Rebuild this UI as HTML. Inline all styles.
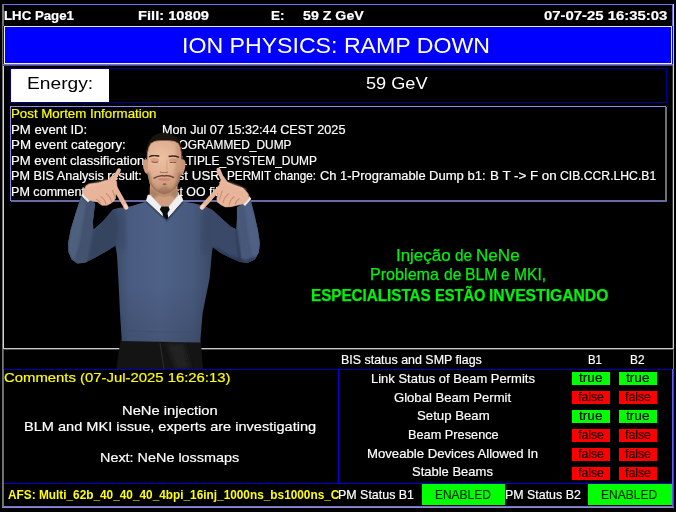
<!DOCTYPE html>
<html><head><meta charset="utf-8">
<style>
html,body{margin:0;padding:0;background:#000;}
body{width:676px;height:512px;position:relative;overflow:hidden;font-family:"Liberation Sans",sans-serif;color:#fff;}
.a{position:absolute;white-space:pre;line-height:1;transform-origin:0 0;}
.ln{position:absolute;}
.t{position:absolute;height:13px;width:38px;background:#00ff00;}
.f{position:absolute;height:13px;width:38px;background:#ff0000;}
</style></head><body>
<!-- frame lines -->
<div class="ln" style="left:3px;top:4px;width:670px;height:1px;background:#6c6cff"></div>
<div class="ln" style="left:2px;top:4px;width:1px;height:504px;background:#747474"></div>
<div class="ln" style="left:3px;top:5px;width:1px;height:21px;background:#6868f0"></div>
<div class="ln" style="left:3px;top:65px;width:1px;height:284px;background:#d6d6d6"></div>
<div class="ln" style="left:3px;top:349px;width:1px;height:20px;background:#5a5a5a"></div>
<div class="ln" style="left:3px;top:369px;width:1px;height:138px;background:#5a5aff"></div>
<div class="ln" style="left:672px;top:5px;width:1px;height:21px;background:#6868f0"></div>
<div class="ln" style="left:672px;top:65px;width:1px;height:284px;background:#3a3a3a"></div>
<div class="ln" style="left:672px;top:369px;width:1px;height:138px;background:#5a5aff"></div>
<div class="ln" style="left:673px;top:4px;width:1px;height:345px;background:#d2d2d2"></div>
<div class="ln" style="left:673px;top:349px;width:1px;height:20px;background:#8a8a8a"></div><div class="ln" style="left:673px;top:369px;width:1px;height:139px;background:#4a4a6a"></div>
<div class="ln" style="left:3px;top:348px;width:671px;height:1px;background:#c8c8c8"></div>
<div class="ln" style="left:3px;top:349px;width:671px;height:1px;background:#4c4c4c"></div>
<div class="ln" style="left:3px;top:506px;width:670px;height:1px;background:#6a6aff"></div>
<div class="ln" style="left:2px;top:507px;width:672px;height:1px;background:#959595"></div>
<div class="ln" style="left:4px;top:368.6px;width:668px;height:1.6px;background:#0000b4"></div>
<div class="ln" style="left:337.6px;top:369px;width:1.4px;height:114px;background:#0000dd"></div>
<div class="ln" style="left:4px;top:482.5px;width:668px;height:1.4px;background:#0000e0"></div>
<!-- title -->
<div class="ln" style="left:3px;top:26px;width:670px;height:39px;background:#0000ff"></div>
<div class="ln" style="left:3px;top:64px;width:670px;height:1px;background:#6c6cff"></div>
<div class="ln" style="left:3px;top:65px;width:670px;height:1px;background:#505050"></div>
<div class="ln" style="left:4px;top:26px;width:666px;height:36px;border:1px solid #ececf4;border-top-color:#e8e8d8"></div>
<!-- energy -->
<div class="ln" style="left:10px;top:68px;width:655px;height:33px;border:1px solid #00008c;border-top-width:1.6px;border-bottom-width:1.3px"></div>
<div class="ln" style="left:10px;top:68px;width:100px;height:1px;background:#000080"></div>
<div class="ln" style="left:11px;top:69px;width:98px;height:32.7px;background:#fff"></div>
<!-- PM box -->
<div class="ln" style="left:10px;top:106px;width:656px;height:95px;background:#8a8aea"></div>
<div class="ln" style="left:11px;top:107px;width:655px;height:94px;background:#6262dd"></div>
<div class="ln" style="left:11px;top:107px;width:656px;height:95px;background:#707070"></div>
<div class="ln" style="left:11px;top:107px;width:655px;height:94px;background:#6262dd"></div>
<div class="ln" style="left:11px;top:107px;width:654px;height:93px;background:#000"></div>
<!-- status boxes -->
<div class="t" style="left:572px;top:372px"></div><div class="t" style="left:619px;top:372px"></div>
<div class="f" style="left:572px;top:391px"></div><div class="f" style="left:619px;top:391px"></div>
<div class="t" style="left:572px;top:410px"></div><div class="t" style="left:619px;top:410px"></div>
<div class="f" style="left:572px;top:429px"></div><div class="f" style="left:619px;top:429px"></div>
<div class="f" style="left:572px;top:448px"></div><div class="f" style="left:619px;top:448px"></div>
<div class="f" style="left:572px;top:467px"></div><div class="f" style="left:619px;top:467px"></div>
<div class="ln" style="left:422px;top:484px;width:83px;height:21px;background:#00ff00"></div>
<div class="ln" style="left:588px;top:484px;width:84px;height:21px;background:#00ff00"></div>
<div class="a" style="left:4.40px;top:10px;font-size:12.1px;color:#ffffff;-webkit-text-stroke:0.18px #ffffff;font-weight:bold;transform:scaleX(1.0952)">LHC Page1</div>
<div class="a" style="left:137.99px;top:10px;font-size:12.1px;color:#ffffff;-webkit-text-stroke:0.18px #ffffff;font-weight:bold;transform:scaleX(1.2140)">Fill: 10809</div>
<div class="a" style="left:271.29px;top:10px;font-size:12.1px;color:#ffffff;-webkit-text-stroke:0.18px #ffffff;font-weight:bold;transform:scaleX(1.1100)">E:</div>
<div class="a" style="left:302.63px;top:10px;font-size:12.1px;color:#ffffff;-webkit-text-stroke:0.18px #ffffff;font-weight:bold;transform:scaleX(1.1745)">59 Z GeV</div>
<div class="a" style="left:544.00px;top:10px;font-size:12.1px;color:#ffffff;-webkit-text-stroke:0.18px #ffffff;font-weight:bold;transform:scaleX(1.2310)">07-07-25 16:35:03</div>
<div class="a" style="left:181.57px;top:34px;font-size:22.8px;color:#ffffff;transform:scaleX(1.0143)">ION PHYSICS: RAMP DOWN</div>
<div class="a" style="left:27.00px;top:76px;font-size:16.0px;color:#000000;transform:scaleX(1.2000)">Energy:</div>
<div class="a" style="left:365.89px;top:75px;font-size:16.4px;color:#ffffff;transform:scaleX(1.1073)">59 GeV</div>
<div class="a" style="left:11.01px;top:108px;font-size:12.2px;color:#ffff00;-webkit-text-stroke:0.18px #ffff00;transform:scaleX(1.0902)">Post Mortem Information</div>
<div class="a" style="left:11.01px;top:124px;font-size:12.1px;color:#ffffff;-webkit-text-stroke:0.18px #ffffff;transform:scaleX(1.0912)">PM event ID:</div>
<div class="a" style="left:11.00px;top:139px;font-size:12.1px;color:#ffffff;-webkit-text-stroke:0.18px #ffffff;transform:scaleX(1.1020)">PM event category:</div>
<div class="a" style="left:11.02px;top:155px;font-size:12.1px;color:#ffffff;-webkit-text-stroke:0.18px #ffffff;transform:scaleX(1.0839)">PM event classification:</div>
<div class="a" style="left:11.05px;top:170px;font-size:12.1px;color:#ffffff;-webkit-text-stroke:0.18px #ffffff;transform:scaleX(1.0463)">PM BIS Analysis result:</div>
<div class="a" style="left:11.06px;top:186px;font-size:12.1px;color:#ffffff;-webkit-text-stroke:0.18px #ffffff;transform:scaleX(1.0397)">PM comment:</div>
<div class="a" style="left:161.75px;top:124px;font-size:12.1px;color:#ffffff;-webkit-text-stroke:0.18px #ffffff;transform:scaleX(1.0466)">Mon Jul 07 15:32:44 CEST 2025</div>
<div class="a" style="left:161.82px;top:139px;font-size:12.1px;color:#ffffff;-webkit-text-stroke:0.18px #ffffff;transform:scaleX(0.9831)">PROGRAMMED_DUMP</div>
<div class="a" style="left:161.81px;top:155px;font-size:12.1px;color:#ffffff;-webkit-text-stroke:0.18px #ffffff;transform:scaleX(0.9865)">MULTIPLE_SYSTEM_DUMP</div>
<div class="a" style="left:161.69px;top:170px;font-size:12.1px;color:#ffffff;-webkit-text-stroke:0.18px #ffffff;transform:scaleX(1.1069)">First USR_</div>
<div class="a" style="left:226.83px;top:170px;font-size:12.1px;color:#ffffff;-webkit-text-stroke:0.18px #ffffff;transform:scaleX(0.9689)">PERMIT change:</div>
<div class="a" style="left:320.03px;top:170px;font-size:12.1px;color:#ffffff;-webkit-text-stroke:0.18px #ffffff;transform:scaleX(1.0691)">Ch 1-Programable</div>
<div class="a" style="left:429.02px;top:170px;font-size:12.1px;color:#ffffff;-webkit-text-stroke:0.18px #ffffff;transform:scaleX(1.0800)">Dump b1:</div>
<div class="a" style="left:490.09px;top:170px;font-size:12.1px;color:#ffffff;-webkit-text-stroke:0.18px #ffffff;transform:scaleX(1.1051)">B T -&gt; F on</div>
<div class="a" style="left:560.49px;top:170px;font-size:12.1px;color:#ffffff;-webkit-text-stroke:0.18px #ffffff;transform:scaleX(1.0085)">CIB.CCR.LHC.B1</div>
<div class="a" style="left:162.80px;top:186px;font-size:12.1px;color:#ffffff;-webkit-text-stroke:0.18px #ffffff;transform:scaleX(1.0214)">test OO fill</div>
<div class="a" style="left:396.16px;top:248px;font-size:16.6px;color:#04f00e;-webkit-text-stroke:0.25px #04f00e;transform:scaleX(1.0196)">Injeção</div>
<div class="a" style="left:454.58px;top:248px;font-size:16.6px;color:#04f00e;-webkit-text-stroke:0.25px #04f00e;transform:scaleX(0.9235)">de</div>
<div class="a" style="left:476.37px;top:248px;font-size:16.6px;color:#04f00e;-webkit-text-stroke:0.25px #04f00e;transform:scaleX(1.0293)">NeNe</div>
<div class="a" style="left:369.63px;top:267px;font-size:16.6px;color:#04f00e;-webkit-text-stroke:0.25px #04f00e;transform:scaleX(0.9714)">Problema</div>
<div class="a" style="left:443.55px;top:267px;font-size:16.6px;color:#04f00e;-webkit-text-stroke:0.25px #04f00e;transform:scaleX(0.9471)">de</div>
<div class="a" style="left:465.25px;top:267px;font-size:16.6px;color:#04f00e;-webkit-text-stroke:0.25px #04f00e;transform:scaleX(0.9469)">BLM</div>
<div class="a" style="left:501.26px;top:267px;font-size:16.6px;color:#04f00e;-webkit-text-stroke:0.25px #04f00e;transform:scaleX(0.9375)">e</div>
<div class="a" style="left:514.46px;top:267px;font-size:16.6px;color:#04f00e;-webkit-text-stroke:0.25px #04f00e;transform:scaleX(0.9406)">MKI,</div>
<div class="a" style="left:310.66px;top:287px;font-size:16.2px;color:#04f00e;-webkit-text-stroke:0.25px #04f00e;font-weight:bold;transform:scaleX(0.9397)">ESPECIALISTAS</div>
<div class="a" style="left:434.79px;top:287px;font-size:16.2px;color:#04f00e;-webkit-text-stroke:0.25px #04f00e;font-weight:bold;transform:scaleX(0.9056)">ESTÃO</div>
<div class="a" style="left:489.23px;top:287px;font-size:16.2px;color:#04f00e;-webkit-text-stroke:0.25px #04f00e;font-weight:bold;transform:scaleX(0.9689)">INVESTIGANDO</div>
<div class="a" style="left:3.50px;top:371px;font-size:13.5px;color:#ffff00;-webkit-text-stroke:0.18px #ffff00;transform:scaleX(1.1015)">Comments (07-Jul-2025 16:26:13)</div>
<div class="a" style="left:122.09px;top:404px;font-size:13.3px;color:#ffffff;-webkit-text-stroke:0.18px #ffffff;transform:scaleX(1.1071)">NeNe injection</div>
<div class="a" style="left:23.70px;top:420px;font-size:13.3px;color:#ffffff;-webkit-text-stroke:0.18px #ffffff;transform:scaleX(1.0951)">BLM and MKI issue, experts are investigating</div>
<div class="a" style="left:100.42px;top:451px;font-size:13.3px;color:#ffffff;-webkit-text-stroke:0.18px #ffffff;transform:scaleX(1.0827)">Next: NeNe lossmaps</div>
<div class="a" style="left:341.28px;top:354px;font-size:12.2px;color:#ffffff;-webkit-text-stroke:0.18px #ffffff;transform:scaleX(1.0204)">BIS status and SMP flags</div>
<div class="a" style="left:587.96px;top:354px;font-size:12.2px;color:#ffffff;-webkit-text-stroke:0.18px #ffffff;transform:scaleX(0.9357)">B1</div>
<div class="a" style="left:630.03px;top:354px;font-size:12.2px;color:#ffffff;-webkit-text-stroke:0.18px #ffffff;transform:scaleX(0.9714)">B2</div>
<div class="a" style="left:371.23px;top:373px;font-size:12.2px;color:#ffffff;-webkit-text-stroke:0.18px #ffffff;transform:scaleX(1.0658)">Link Status of Beam Permits</div>
<div class="a" style="left:393.53px;top:392px;font-size:12.2px;color:#ffffff;-webkit-text-stroke:0.18px #ffffff;transform:scaleX(1.0741)">Global Beam Permit</div>
<div class="a" style="left:416.52px;top:410px;font-size:12.2px;color:#ffffff;-webkit-text-stroke:0.18px #ffffff;transform:scaleX(1.0831)">Setup Beam</div>
<div class="a" style="left:407.95px;top:429px;font-size:12.2px;color:#ffffff;-webkit-text-stroke:0.18px #ffffff;transform:scaleX(1.0459)">Beam Presence</div>
<div class="a" style="left:367.12px;top:448px;font-size:12.2px;color:#ffffff;-webkit-text-stroke:0.18px #ffffff;transform:scaleX(1.0796)">Moveable Devices Allowed In</div>
<div class="a" style="left:412.43px;top:466px;font-size:12.2px;color:#ffffff;-webkit-text-stroke:0.18px #ffffff;transform:scaleX(1.0662)">Stable Beams</div>
<div class="ln" style="left:0;top:484px;width:339px;height:22px;overflow:hidden"><div class="a" style="left:7.80px;top:5px;font-size:12.2px;color:#ffff00;font-weight:bold;transform:scaleX(0.9705)">AFS: Multi_62b_40_40_40_4bpi_16inj_1000ns_bs1000ns_CMS</div></div>
<div class="a" style="left:338.18px;top:489px;font-size:12.2px;color:#ffffff;-webkit-text-stroke:0.18px #ffffff;transform:scaleX(1.0205)">PM Status B1</div>
<div class="a" style="left:435.42px;top:489px;font-size:12.2px;color:#002800;-webkit-text-stroke:0.18px #002800;transform:scaleX(0.9818)">ENABLED</div>
<div class="a" style="left:504.68px;top:489px;font-size:12.2px;color:#ffffff;-webkit-text-stroke:0.18px #ffffff;transform:scaleX(1.0178)">PM Status B2</div>
<div class="a" style="left:601.31px;top:489px;font-size:12.2px;color:#002800;-webkit-text-stroke:0.18px #002800;transform:scaleX(0.9855)">ENABLED</div>
<div class="a" style="left:579.30px;top:372px;font-size:12.3px;color:#000000;-webkit-text-stroke:0.18px #000000;transform:scaleX(1.1143)">true</div>
<div class="a" style="left:626.30px;top:372px;font-size:12.3px;color:#000000;-webkit-text-stroke:0.18px #000000;transform:scaleX(1.1143)">true</div>
<div class="a" style="left:578.10px;top:391px;font-size:12.3px;color:#1a0000;-webkit-text-stroke:0.18px #1a0000;transform:scaleX(0.9962)">false</div>
<div class="a" style="left:625.10px;top:391px;font-size:12.3px;color:#1a0000;-webkit-text-stroke:0.18px #1a0000;transform:scaleX(0.9962)">false</div>
<div class="a" style="left:579.30px;top:410px;font-size:12.3px;color:#000000;-webkit-text-stroke:0.18px #000000;transform:scaleX(1.1143)">true</div>
<div class="a" style="left:626.30px;top:410px;font-size:12.3px;color:#000000;-webkit-text-stroke:0.18px #000000;transform:scaleX(1.1143)">true</div>
<div class="a" style="left:578.10px;top:429px;font-size:12.3px;color:#1a0000;-webkit-text-stroke:0.18px #1a0000;transform:scaleX(0.9962)">false</div>
<div class="a" style="left:625.10px;top:429px;font-size:12.3px;color:#1a0000;-webkit-text-stroke:0.18px #1a0000;transform:scaleX(0.9962)">false</div>
<div class="a" style="left:578.10px;top:448px;font-size:12.3px;color:#1a0000;-webkit-text-stroke:0.18px #1a0000;transform:scaleX(0.9962)">false</div>
<div class="a" style="left:625.10px;top:448px;font-size:12.3px;color:#1a0000;-webkit-text-stroke:0.18px #1a0000;transform:scaleX(0.9962)">false</div>
<div class="a" style="left:578.10px;top:467px;font-size:12.3px;color:#1a0000;-webkit-text-stroke:0.18px #1a0000;transform:scaleX(0.9962)">false</div>
<div class="a" style="left:625.10px;top:467px;font-size:12.3px;color:#1a0000;-webkit-text-stroke:0.18px #1a0000;transform:scaleX(0.9962)">false</div><svg class="ln" style="left:0;top:0" width="676" height="369" viewBox="0 0 676 369">
<defs>
<linearGradient id="sw" x1="118" y1="0" x2="212" y2="0" gradientUnits="userSpaceOnUse">
<stop offset="0" stop-color="#3f4f6e"/><stop offset="0.12" stop-color="#495b80"/><stop offset="0.45" stop-color="#4e6187"/><stop offset="0.8" stop-color="#47597c"/><stop offset="1" stop-color="#3a4967"/>
</linearGradient>
<linearGradient id="swv" x1="0" y1="200" x2="0" y2="342" gradientUnits="userSpaceOnUse">
<stop offset="0" stop-color="#000" stop-opacity="0"/><stop offset="0.6" stop-color="#000" stop-opacity="0"/><stop offset="1" stop-color="#000" stop-opacity="0.12"/>
</linearGradient>
<radialGradient id="fc" cx="161" cy="158" r="30" gradientUnits="userSpaceOnUse">
<stop offset="0" stop-color="#edc1a3"/><stop offset="0.55" stop-color="#e2b092"/><stop offset="1" stop-color="#c99878"/>
</radialGradient>
<filter id="b1" x="-20%" y="-20%" width="140%" height="140%"><feGaussianBlur stdDeviation="1.2"/></filter>
<filter id="b2" x="-20%" y="-20%" width="140%" height="140%"><feGaussianBlur stdDeviation="2.5"/></filter>
<filter id="b0" x="-20%" y="-20%" width="140%" height="140%"><feGaussianBlur stdDeviation="0.6"/></filter>
<clipPath id="swc"><path id="swp" d="M146.5,201.5 L130,206.5 118,208 113,209.5 103.8,220.5 93.6,229.8 92.8,222 93.6,216.6 95.2,203.3 88,199.5 81.1,196.3 75.6,213.4 70.9,229.1 68.1,243.1 68.6,252.5 71.7,259.5 77.2,263.4 85,262.7 95.9,257.2 106.9,250.9 115.5,245.5 117,255.6 118.3,277.9 120,313 121.8,341 200.2,342.5 202.6,313 209.7,277.9 211.9,252.5 212.7,247 219.7,252.5 229.1,257.2 240,261.9 247.8,262.7 254.8,259.5 258.8,252.5 259.8,243.1 258,230.6 254.1,213.4 250.2,198.6 243,203.5 236.9,207.2 236.9,218.1 236.1,229.1 230.6,226.7 221.3,218.1 211.9,209.5 205.6,206.4 195,203.5 183,201.5 166.8,219.9Z"/></clipPath>
<clipPath id="fcc"><path d="M147.3,158 L147.4,152 148.4,147.5 150.6,143.3 154.5,141 160,140.3 168,140.3 174.5,141 178.6,143.3 180.6,147.5 181.3,152 181.4,158 180.8,174.8 179.3,181.5 175.6,188.2 170.4,192.6 164.5,194.4 159.3,193 154.1,189.7 149.6,183.7 147.4,173.4Z"/></clipPath>
</defs>
<!-- pants -->
<path d="M120.5,340 L116.3,369 203,369 200.8,340Z" fill="#141414"/>
<path d="M166,343 L176,369 190,369 184,343Z" fill="#242424" filter="url(#b2)"/><path d="M160,343 L164,369" stroke="#2a2a2a" stroke-width="1.2" fill="none"/>
<!-- neck -->
<path d="M150,183 L150,198 160,209 170,209 178,198 177.2,183Z" fill="#cf9e80"/>
<path d="M150,186 L150,197 153,200 158,195 164,196.5 171,195 176,199 178,197 177.4,186 171,192.6 164.5,194.6 159,193 154,190Z" fill="#a87a5e" filter="url(#b1)" opacity="0.85"/>
<!-- shirt collar -->
<path d="M147.8,194.8 L146,200.4 166.3,220 183.3,200.4 181,194.8 178.5,194.8 168.5,206.8 161.4,206.8 150.2,194.8Z" fill="#f0f0f3"/>
<path d="M150.2,194.8 L161.4,206.8 M178.5,194.8 L168.5,206.8" stroke="#c9c9d0" stroke-width="0.8" fill="none" filter="url(#b0)"/>
<!-- tie -->
<path d="M161.4,206.4 L168.5,206.4 169.7,209.6 167.5,213.3 168.5,218.5 166.3,220.5 163.3,218 162.5,213.3 159.8,209.6Z" fill="#0c0c0e"/>
<!-- sweater -->
<use href="#swp" fill="url(#sw)"/>
<g clip-path="url(#swc)">
 <rect x="60" y="190" width="210" height="160" fill="url(#swv)"/>
 <!-- left arm -->
 <path d="M113,209 L100,222 92,231 86,266 60,266 60,190 97,190 95,204 93,230 96,232Z" fill="#43536f"/>
 <path d="M81,196 L70,229 68,250 74,262 80,240 86,203Z" fill="#50627f" filter="url(#b1)" opacity="0.9"/>
 <path d="M114,208 L103,220 94,230 91,246 88,264 100,257 116,248 119,226Z" fill="#364460" filter="url(#b1)"/>
 <path d="M117,214 L119,250 126,250 124,212Z" fill="#3a4865" filter="url(#b2)" opacity="0.7"/>
 <!-- right arm -->
 <path d="M212,209 L225,221 236,230 243,266 270,266 270,190 235,190 237,207 237,230 234,231Z" fill="#47587b"/>
 <path d="M250,198 L258,230 260,250 254,262 249,240 244,204Z" fill="#4f6286" filter="url(#b1)" opacity="0.9"/>
 <path d="M211,208 L222,219 236,229 239,246 242,264 229,258 212,249 208,226Z" fill="#3b4a69" filter="url(#b1)"/><path d="M236,229 L240,262" stroke="#2e3a54" stroke-width="2" fill="none" filter="url(#b1)"/><path d="M214,248 L230,257 246,262 256,258" stroke="#2a3550" stroke-width="2.5" fill="none" filter="url(#b1)"/>
 <path d="M210,214 L208,250 202,250 204,212Z" fill="#384662" filter="url(#b2)" opacity="0.7"/>
 <!-- neckband -->
 <path d="M146.5,201.5 L166.8,219.9 183,201.5" stroke="#3d4d6c" stroke-width="3.4" fill="none"/>
 <!-- hem band -->
 <path d="M120,331 L202,332.5" stroke="#3f4f6e" stroke-width="0.8" fill="none" opacity="0.8"/>
</g>
<!-- hair -->
<path d="M145.6,160 L145.8,153 146.4,148.5 148.2,142.8 151.9,136.9 157.8,133.6 163.7,132.8 171.2,133.9 177.1,137.6 180.4,142.8 182.3,150.3 182.9,160 180,164 148,164Z" fill="#1a1410"/>
<!-- ears -->
<path d="M147.6,159.5 Q143.6,158 142.7,162.5 Q142.6,168 145,172.5 Q146.5,174.5 148,173Z" fill="#cf9c7e"/>
<path d="M180.6,159.5 Q184.6,158 185.5,162.5 Q185.8,168 183.4,173 Q181.8,175.5 180.2,174Z" fill="#c69274"/>
<!-- face -->
<path id="face" d="M147.3,158 L147.4,152 148.4,147.5 150.6,143.3 154.5,141 160,140.3 168,140.3 174.5,141 178.6,143.3 180.6,147.5 181.3,152 181.4,158 180.8,174.8 179.3,181.5 175.6,188.2 170.4,192.6 164.5,194.4 159.3,193 154.1,189.7 149.6,183.7 147.4,173.4Z" fill="url(#fc)"/>
<g clip-path="url(#fcc)">
 <!-- right side shade -->
 <path d="M176,142 L182,150 182,176 178,186 174,176 176,160Z" fill="#b98466" opacity="0.45" filter="url(#b1)"/>
 <!-- beard along jaw -->
 <path d="M147.6,172 L149.8,183.5 154.3,189.5 159.5,192.6 164.5,193.8 170.2,192.2 175.3,188 178.9,181.5 180.6,173" stroke="#7a5642" stroke-width="3.2" fill="none" opacity="0.62" filter="url(#b1)"/>
 <ellipse cx="164.5" cy="190" rx="6" ry="3.2" fill="#8a6450" opacity="0.45" filter="url(#b1)"/>
 <!-- lips -->
 <ellipse cx="164.3" cy="179.4" rx="6.3" ry="1.5" fill="#cc8478" opacity="0.9" filter="url(#b0)"/>
 <!-- soul patch -->
 <ellipse cx="164.6" cy="184.2" rx="2" ry="1" fill="#7a5644" opacity="0.8" filter="url(#b0)"/>
 <!-- mustache -->
 <path d="M153.6,178.4 Q157,176.3 162.3,175.5 L164.3,175.9 166.5,175.5 Q171,176 174,177.6" stroke="#6a4737" stroke-width="1.5" fill="none" filter="url(#b0)"/>
 <!-- eyebrows -->
 <path d="M149.2,156.8 Q153,154.8 159.3,156.2" stroke="#3a261c" stroke-width="1.5" fill="none" filter="url(#b0)"/>
 <path d="M168.6,156.6 Q174,155.2 179,157.4" stroke="#3a261c" stroke-width="1.5" fill="none" filter="url(#b0)"/>
 <!-- eye sockets -->
 <ellipse cx="154.8" cy="160" rx="4.2" ry="2" fill="#c9906f" opacity="0.6" filter="url(#b0)"/>
 <ellipse cx="173.2" cy="160.3" rx="4.2" ry="2" fill="#c48a6a" opacity="0.6" filter="url(#b0)"/>
 <!-- eyes closed -->
 <path d="M151.5,161.8 Q155,163 158.2,162" stroke="#8a503c" stroke-width="1" fill="none" filter="url(#b0)"/>
 <path d="M169.7,162.2 Q173,163.4 176.4,162.2" stroke="#8a503c" stroke-width="1" fill="none" filter="url(#b0)"/>
 <!-- nose -->
 <path d="M159.8,172 Q164,173.6 168,172" stroke="#a6705a" stroke-width="1.2" fill="none" filter="url(#b0)"/>
 <path d="M167,160 L167.6,170" stroke="#c8957a" stroke-width="1.4" fill="none" filter="url(#b1)" opacity="0.8"/>
 <!-- hairline soft -->
 <path d="M147.4,152 L148.4,147.5 150.6,143.3 154.5,141 160,140.3 168,140.3 174.5,141 178.6,143.3 180.6,147.5 181.3,152" stroke="#5a4232" stroke-width="1.2" fill="none" filter="url(#b0)" opacity="0.7"/>
</g>
<!-- left hand -->
<path d="M81,195.2 L83.8,192.8 90,200.3 88,202.3Z" fill="#eeeeee"/>
<g fill="#e9b59a" stroke="#e9b59a" stroke-linecap="round" stroke-linejoin="round">
<path d="M89,184 L98.4,182.9 107.8,179.9 112.5,175.5 116.5,181.5 117,187 115.2,198.7 113.7,201.2 110,203.8 106.6,205.3 102,205.3 97.3,201.8 89,200 84.6,196 83.2,193.5 84,189.5 86,186.2Z" stroke-width="0.6"/>
<path d="M113.8,179.5 L119,170.2" stroke-width="3.8" fill="none"/>
<path d="M115,187.5 L126.2,207.3" stroke-width="4.6" fill="none"/>
</g>
<path d="M125.2,205.6 L126.6,208" stroke="#f4d6c8" stroke-width="2.6" stroke-linecap="round"/>
<path d="M112.5,190 L115.5,199 M106,193.5 Q110.5,196.5 111.5,202 M100.5,196.5 Q105,199 106,204.6 M96,199 Q99.5,200.5 100.5,203.5" stroke="#c48c70" stroke-width="1.1" fill="none" filter="url(#b0)" opacity="0.9"/>
<path d="M85,187 Q95,183.5 107,180.5" stroke="#f3c8b0" stroke-width="1.6" fill="none" filter="url(#b1)" opacity="0.8"/>
<!-- right hand -->
<path d="M243,203.9 L249.6,196.2 251.2,199 245,206Z" fill="#eeeeee"/>
<g fill="#e9b59a" stroke="#e9b59a" stroke-linecap="round" stroke-linejoin="round">
<path d="M247.6,193 L242.8,188.1 234.5,185.2 227.5,182.3 223.5,176.5 220,182 219.3,187.5 216.8,198.7 217.5,202.2 221,204.8 225.2,206.9 231,206.7 236.9,205.3 243.9,203.6 247.2,200.5 248.8,198 248.6,195Z" stroke-width="0.6"/>
<path d="M222.8,180 L218.4,169.6" stroke-width="3.8" fill="none"/>
<path d="M220.3,187 L202,207.4" stroke-width="4.6" fill="none"/>
</g>
<path d="M203.2,206 L201.6,208" stroke="#f4d6c8" stroke-width="2.6" stroke-linecap="round"/>
<path d="M222.5,190.5 L219.5,199.5 M229,193.5 Q224.5,196.5 223,202.8 M234.5,196.5 Q230.5,199 229,205.4 M239.5,198.5 Q236,200.5 235,204.6" stroke="#c48c70" stroke-width="1.1" fill="none" filter="url(#b0)" opacity="0.9"/>
<path d="M246,190.5 Q238,186 227,182.5" stroke="#f3c8b0" stroke-width="1.6" fill="none" filter="url(#b1)" opacity="0.8"/>
</svg>
</body></html>
